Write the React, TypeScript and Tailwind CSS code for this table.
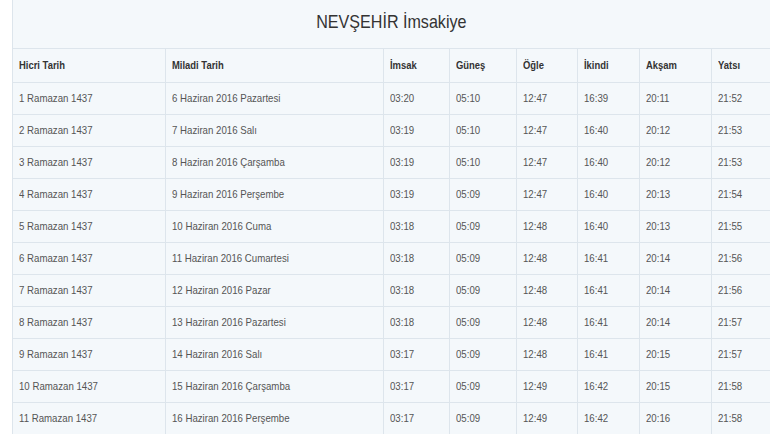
const rows: string[][] = [
  ["1 Ramazan 1437", "6 Haziran 2016 Pazartesi", "03:20", "05:10", "12:47", "16:39", "20:11", "21:52"],
  ["2 Ramazan 1437", "7 Haziran 2016 Salı", "03:19", "05:10", "12:47", "16:40", "20:12", "21:53"],
  ["3 Ramazan 1437", "8 Haziran 2016 Çarşamba", "03:19", "05:10", "12:47", "16:40", "20:12", "21:53"],
  ["4 Ramazan 1437", "9 Haziran 2016 Perşembe", "03:19", "05:09", "12:47", "16:40", "20:13", "21:54"],
  ["5 Ramazan 1437", "10 Haziran 2016 Cuma", "03:18", "05:09", "12:48", "16:40", "20:13", "21:55"],
  ["6 Ramazan 1437", "11 Haziran 2016 Cumartesi", "03:18", "05:09", "12:48", "16:41", "20:14", "21:56"],
  ["7 Ramazan 1437", "12 Haziran 2016 Pazar", "03:18", "05:09", "12:48", "16:41", "20:14", "21:56"],
  ["8 Ramazan 1437", "13 Haziran 2016 Pazartesi", "03:18", "05:09", "12:48", "16:41", "20:14", "21:57"],
  ["9 Ramazan 1437", "14 Haziran 2016 Salı", "03:17", "05:09", "12:48", "16:41", "20:15", "21:57"],
  ["10 Ramazan 1437", "15 Haziran 2016 Çarşamba", "03:17", "05:09", "12:49", "16:42", "20:15", "21:58"],
  ["11 Ramazan 1437", "16 Haziran 2016 Perşembe", "03:17", "05:09", "12:49", "16:42", "20:16", "21:58"],
];

const headers = ["Hicri Tarih", "Miladi Tarih", "İmsak", "Güneş", "Öğle", "İkindi", "Akşam", "Yatsı"];

// the page text is set in a narrow Arial-like face; squeeze Liberation Sans to match
export default function App() {
  return (
    <div className="h-[434px] w-[770px] overflow-hidden bg-white pl-[12px] font-['Liberation_Sans',Arial,sans-serif]">
      <div className="h-full overflow-hidden border-l border-[#dde5ec] bg-[#f4f8fb]">
        <h1 className="h-[48px] pt-[10px] text-center text-[18.5px] leading-[23px] text-[#333]">
          <span className="inline-block origin-center scale-x-[0.87]">NEVŞEHİR İmsakiye</span>
        </h1>
        <table className="w-[800px] table-fixed border-collapse text-[11.5px]">
          <colgroup>
            <col className="w-[152px]" />
            <col className="w-[218px]" />
            <col className="w-[66px]" />
            <col className="w-[67px]" />
            <col className="w-[61px]" />
            <col className="w-[62px]" />
            <col className="w-[72px]" />
            <col />
          </colgroup>
          <thead>
            <tr className="h-[34px] border-y border-[#dde5ec]">
              {headers.map((h, i) => (
                <th
                  key={h}
                  className={`pl-[6px] text-left align-middle font-bold text-[#333] ${i > 0 ? "border-l border-[#dde5ec]" : ""}`}
                >
                  <span className="inline-block origin-left scale-x-[0.82]">{h}</span>
                </th>
              ))}
            </tr>
          </thead>
          <tbody>
            {rows.map((r) => (
              <tr key={r[0]} className="h-[32px] border-b border-[#dde5ec]">
                {r.map((c, i) => (
                  <td
                    key={i}
                    className={`pl-[6px] align-middle text-[#555] ${i > 0 ? "border-l border-[#dde5ec]" : ""}`}
                  >
                    <span className="inline-block origin-left scale-x-[0.84]">{c}</span>
                  </td>
                ))}
              </tr>
            ))}
          </tbody>
        </table>
      </div>
    </div>
  );
}
